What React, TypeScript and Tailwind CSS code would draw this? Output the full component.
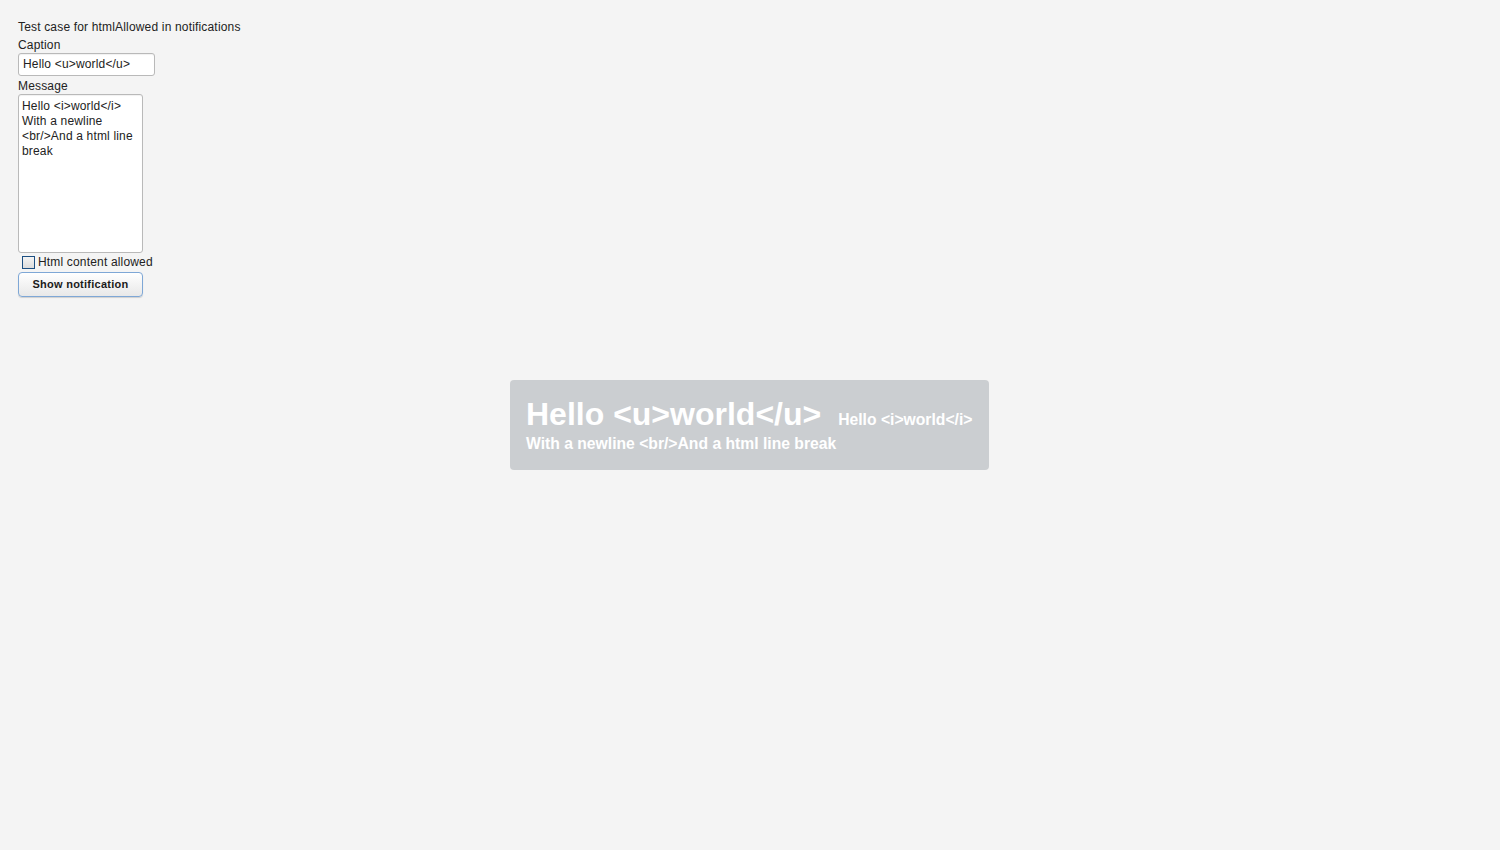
import React from 'react';

const font = { fontFamily: '"Liberation Sans", Arial, sans-serif' };

export default function App() {
  return (
    <div className="relative min-h-[850px] w-full bg-[#f4f4f4] text-[#222] text-[12px] tracking-[0.17px]" style={font}>
      {/* Test form */}
      <div className="flex flex-col items-start pl-[18px] pt-[20px]">
        <div className="leading-[15px] mb-[3px]">Test case for htmlAllowed in notifications</div>
        <label className="leading-[15px]">Caption</label>
        <div className="w-[137px] h-[23px] bg-white border border-[#b9b9b9] rounded-[3px] shadow-[inset_0_1px_1px_rgba(0,0,0,0.06)] flex items-center pl-[4px] leading-[15px] whitespace-nowrap">
          Hello &lt;u&gt;world&lt;/u&gt;
        </div>
        <label className="leading-[15px] mt-[3px]">Message</label>
        <div className="w-[125px] h-[159px] bg-white border border-[#b9b9b9] rounded-[3px] pl-[3px] pt-[4px] leading-[15px] shadow-[inset_0_1px_1px_rgba(0,0,0,0.06)] whitespace-nowrap">
          <div>Hello &lt;i&gt;world&lt;/i&gt;</div>
          <div>With a newline</div>
          <div>&lt;br/&gt;And a html line</div>
          <div>break</div>
        </div>
        <div className="flex items-center h-[19px] pl-[4px]">
          <span className="w-[13px] h-[13px] border border-[#1c4f82] bg-gradient-to-b from-[#f4f4f4] to-[#dcdcdc] mr-[3px]" />
          <span className="leading-[15px]">Html content allowed</span>
        </div>
        <button className="w-[125px] h-[25px] rounded-[4px] border border-[#7ea7d6] bg-gradient-to-b from-white to-[#e8e8e8] shadow-[0_1px_1px_rgba(0,0,0,0.15)] text-[11px] font-bold text-[#1b1b1b] leading-none tracking-[0.25px]">
          Show notification
        </button>
      </div>

      {/* Notification overlay */}
      <div className="absolute left-[510px] top-[380px] w-[479px] h-[90px] rounded-[4px] bg-[#cbced1] text-white px-4 pt-[18px] font-bold tracking-normal whitespace-nowrap">
        <div className="flex items-baseline">
          <span className="text-[32px] leading-[32px]">Hello &lt;u&gt;world&lt;/u&gt;</span>
          <span className="ml-[17px] text-[15.7px] leading-5">Hello &lt;i&gt;world&lt;/i&gt;</span>
        </div>
        <div className="mt-1 text-[15.7px] leading-5">With a newline &lt;br/&gt;And a html line break</div>
      </div>
    </div>
  );
}
